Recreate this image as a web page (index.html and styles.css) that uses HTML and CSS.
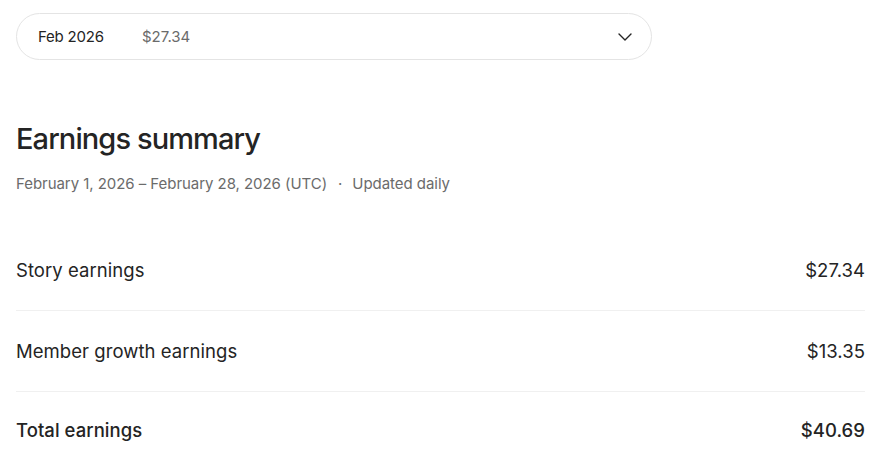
FILE: index.html
```html
<!DOCTYPE html>
<html lang="en">
<head>
<meta charset="utf-8">
<title>Earnings summary</title>
<link rel="stylesheet" href="styles.css">
</head>
<body>
<main class="page">
  <button class="month-select" type="button">
    <span class="month">Feb 2026</span>
    <span class="month-amount">$27.34</span>
    <svg class="chevron" width="14" height="8" viewBox="0 0 14 8" aria-hidden="true">
      <path d="M1 1l6 6 6-6" fill="none" stroke="#242424" stroke-width="1.4" stroke-linecap="round" stroke-linejoin="round"/>
    </svg>
  </button>

  <h1 class="title">Earnings summary</h1>
  <p class="subtitle">February 1, 2026 – February 28, 2026 (UTC)<span class="dot">·</span>Updated daily</p>

  <div class="rows">
    <div class="row">
      <span class="label">Story earnings</span>
      <span class="value">$27.34</span>
    </div>
    <div class="row">
      <span class="label">Member growth earnings</span>
      <span class="value">$13.35</span>
    </div>
    <div class="row total">
      <span class="label">Total earnings</span>
      <span class="value">$40.69</span>
    </div>
  </div>
</main>
</body>
</html>
```

FILE: styles.css
```css
html, body {
  margin: 0;
  padding: 0;
  background: #ffffff;
}

body {
  font-family: Inter, "Helvetica Neue", Arial, sans-serif;
  color: #242424;
  -webkit-font-smoothing: antialiased;
}

.page {
  width: 849px;
  padding: 13px 16px 0;
}

.month-select {
  display: flex;
  align-items: center;
  width: 636px;
  height: 47px;
  box-sizing: border-box;
  padding: 0 19px 0 21px;
  border: 1px solid #e4e4e4;
  border-radius: 24px;
  background: #ffffff;
  font-family: inherit;
  font-size: 15px;
  letter-spacing: -0.2px;
  cursor: pointer;
}

.month {
  color: #242424;
  width: 104px;
  text-align: left;
}

.month-amount {
  color: #6b6b6b;
  letter-spacing: 0;
}

.chevron {
  margin-left: auto;
}

.title {
  margin: 61px 0 0;
  font-size: 29px;
  line-height: 36px;
  font-weight: 500;
  letter-spacing: -0.9px;
  color: #242424;
}

.subtitle {
  margin: 17px 0 0;
  font-size: 15px;
  line-height: 20px;
  color: #6b6b6b;
  letter-spacing: -0.05px;
}

.dot {
  padding: 0 10px 0 11px;
}

.rows {
  margin-top: 48px;
}

.row {
  display: flex;
  justify-content: space-between;
  align-items: center;
  height: 80px;
  border-bottom: 1px solid #f0f0f0;
  font-size: 18.5px;
  letter-spacing: 0.05px;
  color: #242424;
}

.row:first-child {
  margin-top: -12px;
}

.row.total {
  border-bottom: none;
  font-weight: 500;
  height: 76px;
}
```
